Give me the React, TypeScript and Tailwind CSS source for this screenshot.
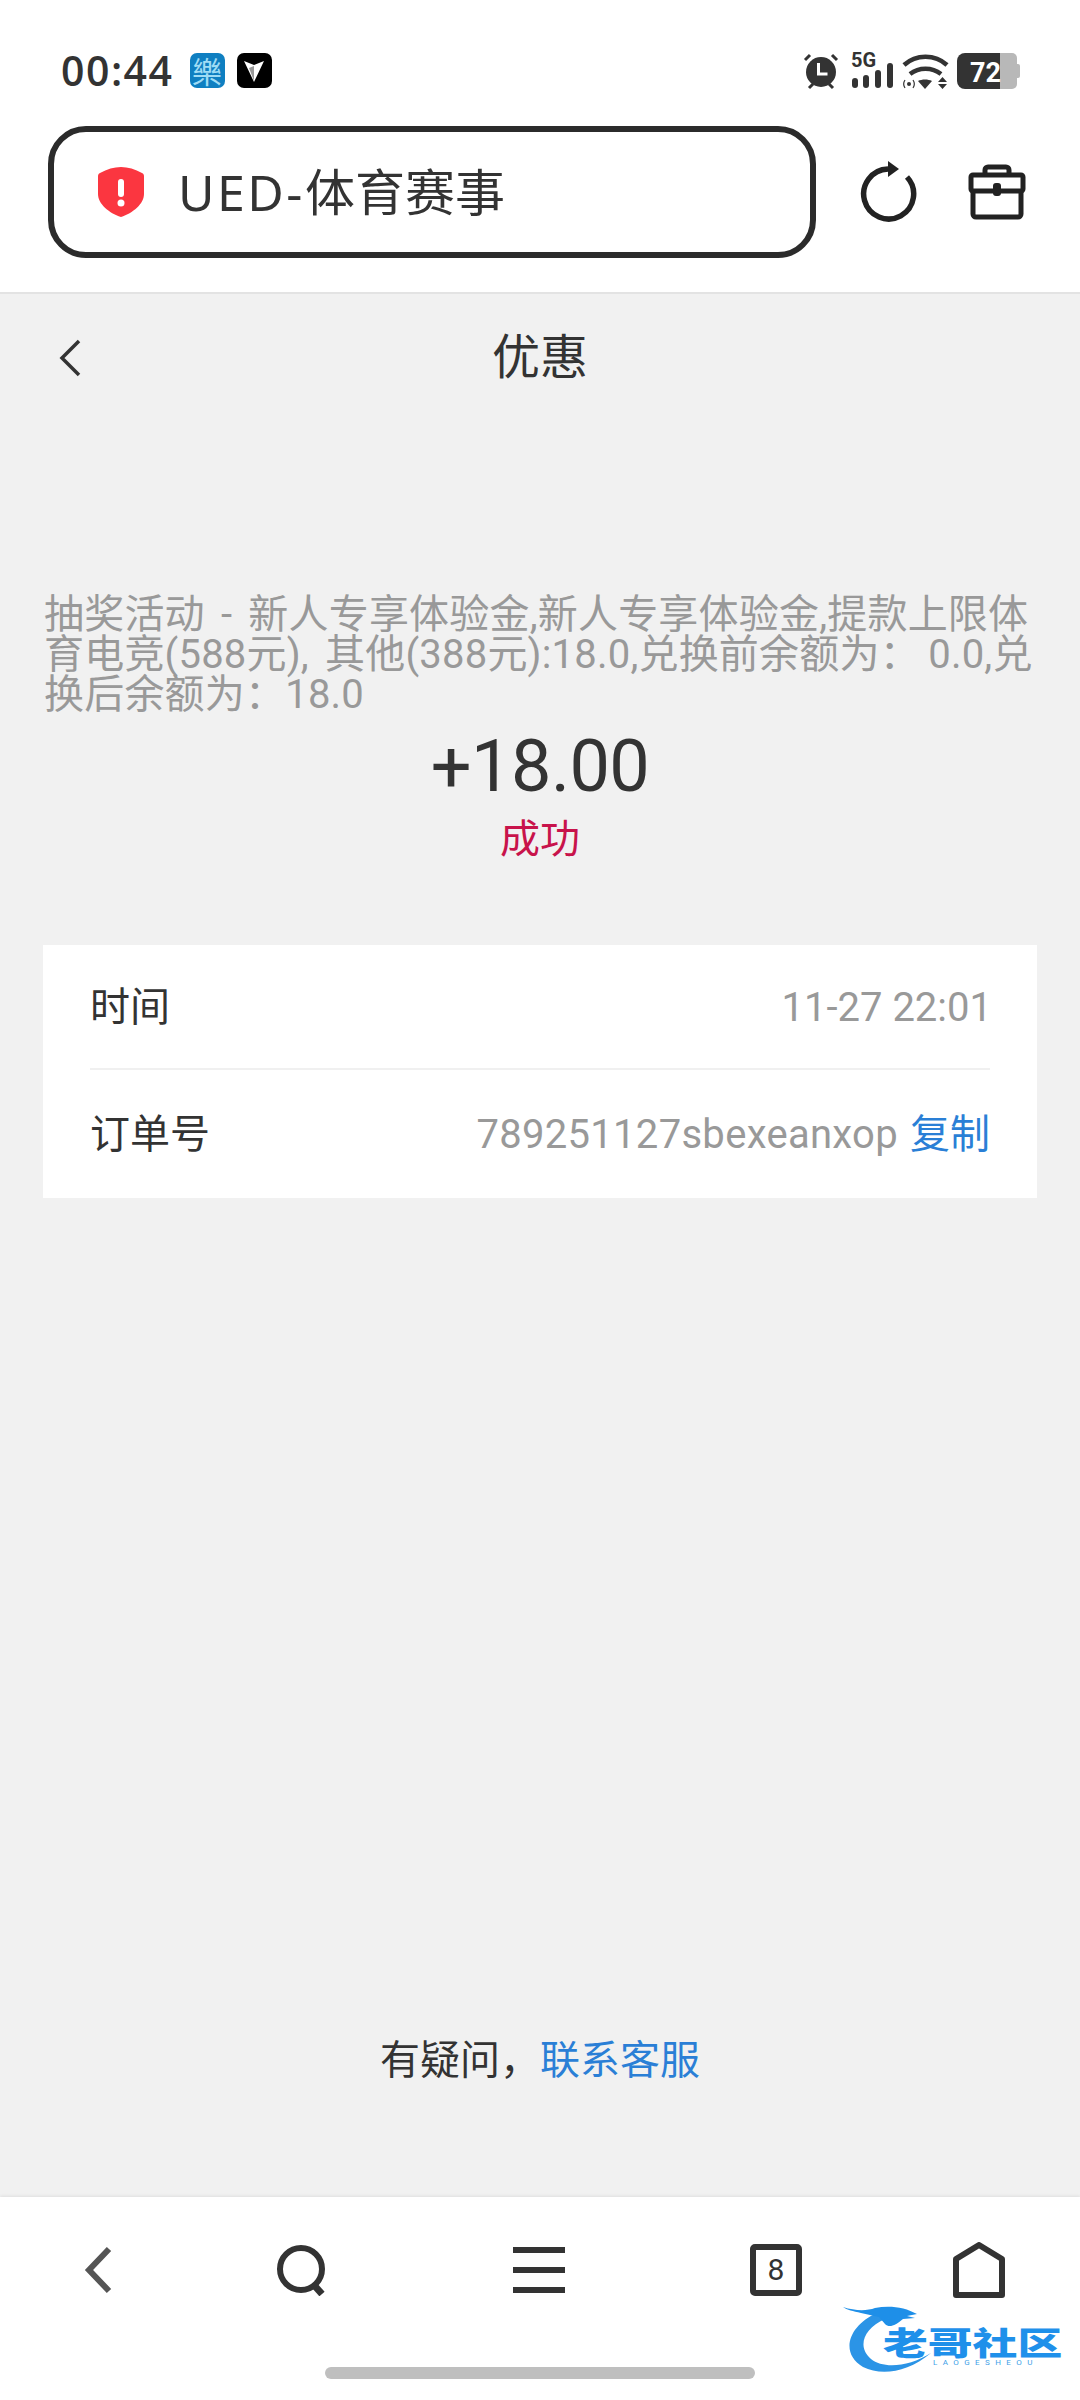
const sans = 'font-["Roboto","Noto_Sans_CJK_SC",sans-serif]'

function StatusIcons() {
  return (
    <svg width="218" height="38" viewBox="0 0 218 38" className="block overflow-visible">
      {/* alarm */}
      <circle cx="19" cy="20" r="15" fill="#333" />
      <path d="M16.500 11v11h9" fill="none" stroke="#fff" strokeWidth="3" />
      <path d="M3 8l5-5M35 8l-5-5M7 36l4-4M31 36l-4-4" stroke="#333" strokeWidth="3" />
      {/* 5G + signal */}
      <text x="49" y="15" fontSize="20" fontWeight="700" fill="#333" fontFamily="Roboto, sans-serif">5G</text>
      <rect x="50" y="26" width="6" height="10" rx="3" fill="#333" />
      <rect x="61" y="23" width="6" height="13" rx="3" fill="#333" />
      <rect x="73" y="18" width="6" height="18" rx="3" fill="#333" />
      <rect x="85" y="11" width="6" height="25" rx="3" fill="#333" />
      {/* wifi */}
      <path d="M102 13c12-11 31-11 43 0M108 22c9-7 22-7 31 0" fill="none" stroke="#333" strokeWidth="4.500" />
      <path d="M116 29c4-2 10-2 14 0l-7 8z" fill="#333" />
      <circle cx="107" cy="32" r="2" fill="#333" />
      <path d="M103 28c-2 3-2 5 0 8M111 28c2 3 2 5 0 8" fill="none" stroke="#333" strokeWidth="1.200" />
      <path d="M136 30l4.500-5 4.500 5zM136 32h9l-4.500 5z" fill="#333" />
      {/* battery */}
      <path d="M163 1h35v36h-35a8 8 0 0 1-8-8V9a8 8 0 0 1 8-8z" fill="#333" />
      <path d="M198 1h12a5 5 0 0 1 5 5v26a5 5 0 0 1-5 5h-12z" fill="#b8b8b8" />
      <path d="M215 12h1a2 2 0 0 1 2 2v10a2 2 0 0 1-2 2h-1z" fill="#b8b8b8" />
      <text x="168" y="30" fontSize="27" fontWeight="700" fill="#fff" fontFamily="Roboto, sans-serif">72</text>
    </svg>
  )
}

function Refresh() {
  return (
    <svg width="60" height="66" viewBox="0 0 60 66" className="block">
      <path d="M49 18A25 25 0 1 1 30 10" fill="none" stroke="#222" strokeWidth="5.500" />
      <path d="M30 2l11 8-11 8z" fill="#222" />
    </svg>
  )
}

function Toolbox() {
  return (
    <svg width="58" height="56" viewBox="0 0 58 56" className="block">
      <path d="M17 11V6a3 3 0 0 1 3-3h18a3 3 0 0 1 3 3v5" fill="none" stroke="#222" strokeWidth="5" />
      <rect x="3" y="11" width="52" height="16" rx="2" fill="none" stroke="#222" strokeWidth="5" />
      <path d="M5 27v23a3 3 0 0 0 3 3h42a3 3 0 0 0 3-3V27" fill="none" stroke="#222" strokeWidth="5" />
      <rect x="25" y="19" width="8" height="13" rx="3" fill="#222" />
    </svg>
  )
}

function Watermark() {
  return (
    <div className="absolute left-[843px] top-[2303px] w-[222px] h-[76px]">
      <svg width="120" height="76" viewBox="0 0 120 76" className="absolute left-0 top-0">
        <path d="M34 10C6 22-4 50 20 64c18 9 44 6 68-14-22 14-48 16-60 6C14 44 20 26 42 16z" fill="#2b94e6" />
        <path d="M0 4c12 4 24 4 32 1 14-3 30-1 42 6l-10 2 8 2-12 1c-8 7-14 9-18 5l-6-7-18-4C10 8 4 7 0 4z" fill="#1e8fe8" />
      </svg>
      <div className='absolute left-[40px] top-[20px] h-[36px] text-[32px] leading-[36px] font-black whitespace-nowrap text-[#1f90ea] origin-left scale-x-[1.4] font-["Noto_Sans_CJK_SC",sans-serif]'>老哥社区</div>
      <div className='absolute left-[90px] top-[56px] text-[8px] leading-[8px] tracking-[5.400px] whitespace-nowrap text-[#3f9fe8] font-["Roboto",sans-serif]'>LAOGESHEOU</div>
    </div>
  )
}

export default function App() {
  return (
    <div className={`relative w-[1080px] h-[2400px] flex flex-col bg-[#f1f1f1] text-[#333] overflow-hidden ${sans}`}>
      <header className="h-[294px] bg-white border-b-2 border-[#e3e3e3] shrink-0">
        <div className="h-[126px] pt-[52px] pl-[61px] pr-[60px] flex items-start">
          <span className='text-[41px] leading-[37px] font-semibold text-[#333] tracking-[1.500px] font-["Open_Sans",sans-serif]'>00:44</span>
          <div className='ml-[16px] mt-[1px] w-[35px] h-[35px] rounded-[7px] bg-[#0f7fc1] flex items-center justify-center text-[30px] leading-[35px] text-[#9fdcf5] font-["Noto_Sans_CJK_TC",sans-serif]'>樂</div>
          <div className="ml-[12px] mt-[1px] w-[35px] h-[35px] rounded-[7px] bg-black flex items-center justify-center">
            <svg width="20" height="22" viewBox="0 0 20 22">
              <path d="M0 1l10 4 10-4-10 21z" fill="#fff" />
              <path d="M10 6v15l-5-13z" fill="#999" />
            </svg>
          </div>
          <div className="ml-auto">
            <StatusIcons />
          </div>
        </div>
        <div className="flex items-center pl-[48px]">
          <div className="w-[768px] h-[132px] border-[6px] border-[#2b2b2b] rounded-[38px] flex items-center pl-[44px]">
            <svg width="46" height="50" viewBox="0 0 46 50" className="block">
              <path d="M23 0c7 0 14 2 21 6 2 1 2 2 2 4v17c0 10-11 19-23 23C11 46 0 37 0 27V10c0-2 0-3 2-4 7-4 14-6 21-6z" fill="#fb3640" />
              <rect x="20" y="12" width="6" height="18" rx="3" fill="#fff" />
              <circle cx="23" cy="36" r="3.500" fill="#fff" />
            </svg>
            <span className='ml-[34px] text-[50px] leading-[60px] text-[#333] font-["Noto_Sans",Noto_Sans_CJK_SC,sans-serif]'>
              <span className="tracking-[2.500px]">UED-</span>体育赛事
            </span>
          </div>
          <div className="ml-[42px] w-[60px]">
            <Refresh />
          </div>
          <div className="ml-[50px] w-[58px]">
            <Toolbox />
          </div>
        </div>
      </header>

      <main className="flex-1 flex flex-col">
        <div className="h-[122px] pt-[6px] relative flex items-center justify-center">
          <svg width="24" height="40" viewBox="0 0 24 40" className="absolute left-[58px] top-[44px]">
            <path d="M21 3L4 20l17 17" fill="none" stroke="#333" strokeWidth="3.500" />
          </svg>
          <span className="text-[48px] leading-[60px] text-[#333]">优惠</span>
        </div>

        <p className="mt-[179px] px-[44px] text-[40px] leading-[40px] tracking-[0.200px] [word-spacing:6px] text-[#999]">
          {'抽奖活动 - 新人专享体验金,新人专享体验金,提款上限体育电竞(588元), 其他(388元):18.0,兑换前余额为：\u20090.0,兑换后余额为：18.0'}
        </p>
        <div className="mt-[7px] text-center text-[72px] leading-[90px] tracking-[-0.500px] text-[#333]">+18.00</div>
        <div className="mt-[3px] text-center text-[40px] leading-[50px] text-[#c8134b]">成功</div>

        <section className="mt-[80px] mx-[43px] bg-white px-[47px]">
          <div className="h-[125px] pt-[3px] flex items-center justify-between border-b-2 border-[#f0f0f0]">
            <span className="text-[40px] text-[#333]">时间</span>
            <span className="-mr-[2px] text-[40px] text-[#999]">11-27 22:01</span>
          </div>
          <div className="h-[128px] pt-[2px] flex items-center justify-between">
            <span className="text-[40px] text-[#333]">订单号</span>
            <span className="text-[40px] text-[#999] tracking-[0.300px]">
              789251127sbexeanxop
              <span className="ml-[12px] tracking-normal text-[#2a7fd6]">复制</span>
            </span>
          </div>
        </section>

        <div className="mt-auto mb-[111px] text-center text-[40px] leading-[50px] text-[#333]">
          有疑问，<span className="text-[#2a7fd6]">联系客服</span>
        </div>
      </main>

      <footer className="h-[203px] bg-white shrink-0 shadow-[0_-1px_3px_rgba(0,0,0,0.08)] flex flex-col">
        <nav className="mt-[45px] h-[56px] pl-[73px] flex items-center">
          <svg width="52" height="52" viewBox="0 0 52 52" className="block">
            <path d="M36 5L16 26l20 21" fill="none" stroke="#555" strokeWidth="6" />
          </svg>
          <svg width="52" height="52" viewBox="0 0 52 52" className="ml-[151px] block">
            <circle cx="25" cy="25" r="21" fill="none" stroke="#333" strokeWidth="6" />
            <path d="M37 40l9 10" stroke="#333" strokeWidth="7" />
          </svg>
          <div className="ml-[185px] w-[52px] flex flex-col gap-[14px]">
            <div className="h-[6px] bg-[#333]" />
            <div className="h-[6px] bg-[#333]" />
            <div className="h-[6px] bg-[#333]" />
          </div>
          <div className="ml-[185px] w-[52px] h-[52px] rounded-[5px] border-[6px] border-[#333] flex items-center justify-center text-[30px] leading-none text-[#333]">8</div>
          <svg width="52" height="56" viewBox="0 0 52 56" className="ml-[151px] block">
            <path d="M26 3L49 17v36H3V17z" fill="none" stroke="#333" strokeWidth="6" strokeLinejoin="round" />
          </svg>
        </nav>
        <div className="mt-[69px] mx-auto w-[430px] h-[12px] rounded-full bg-[#bfbfbf]" />
      </footer>

      <Watermark />
    </div>
  )
}
